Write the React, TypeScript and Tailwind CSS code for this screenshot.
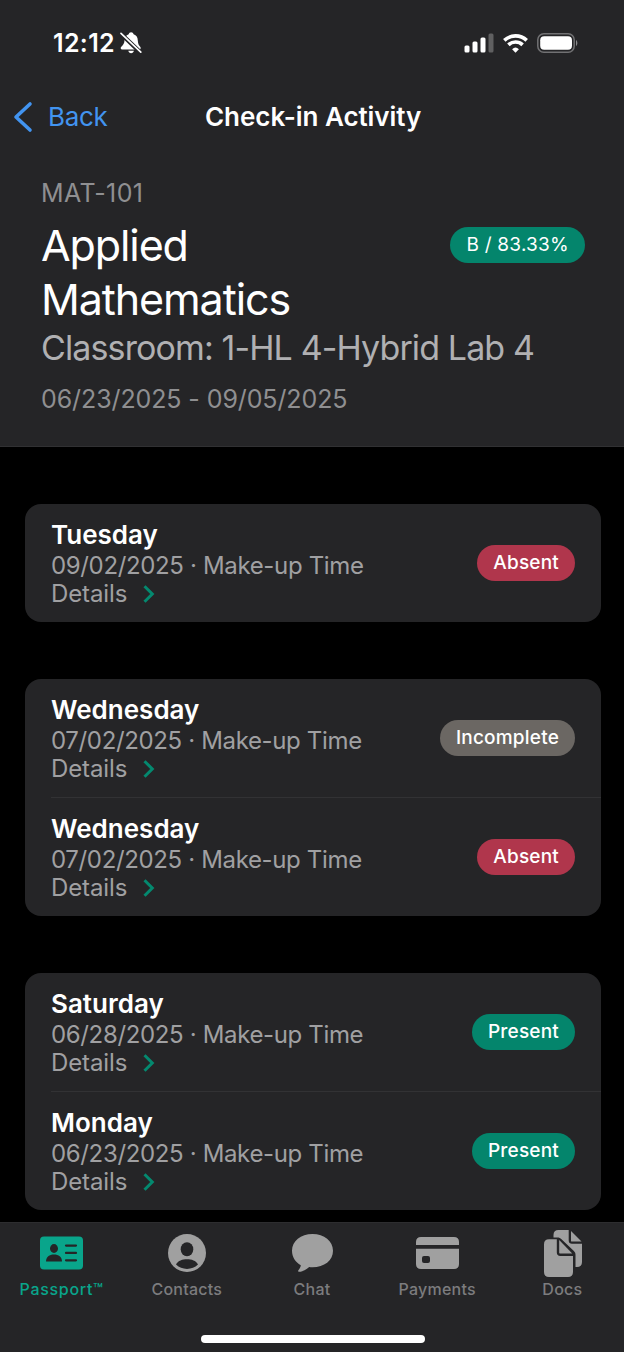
type Status = "Absent" | "Incomplete" | "Present";
type Entry = { day: string; date: string; status: Status };

const groups: Entry[][] = [
  [{ day: "Tuesday", date: "09/02/2025", status: "Absent" }],
  [
    { day: "Wednesday", date: "07/02/2025", status: "Incomplete" },
    { day: "Wednesday", date: "07/02/2025", status: "Absent" },
  ],
  [
    { day: "Saturday", date: "06/28/2025", status: "Present" },
    { day: "Monday", date: "06/23/2025", status: "Present" },
  ],
];

const statusColor: Record<Status, string> = {
  Absent: "bg-[#b0364c]",
  Incomplete: "bg-[#6b6763]",
  Present: "bg-[#04856c]",
};

function StatusBar() {
  return (
    <div className="flex h-[86px] items-center pl-[53px] pr-[45px] text-white">
      <span className="text-[25px] font-semibold leading-none tracking-[0.35px]">12:12</span>
      <svg className="ml-[5px]" width="22" height="22" viewBox="0 0 22 22" fill="currentColor">
        <path d="M8.3 18.8h5.6c-.3 1.600-1.400 2.400-2.800 2.400s-2.500-.8-2.800-2.400Z" />
        <path d="M11.1.3c1.300 0 2.200.8 2.500 1.900 2.900 1 4.100 3.200 4.200 6.200.2 3.600 1 4.900 2.600 6.600.5.600.3 2.500-.8 2.500H2.200c-1.600 0-1.900-1.600-1.100-2.500 2.200-2.400 3.200-3.400 3.400-6.600.1-3 1.400-5.200 4.200-6.200C9 1.100 9.800.3 11.100.3Z" />
        <path d="M0 .8 21 21" stroke="#252527" strokeWidth="4.200" />
        <path d="m1 1.300 19.800 18.800" stroke="currentColor" strokeWidth="1.700" strokeLinecap="round" />
      </svg>
      <div className="ml-auto flex items-center gap-[9px]">
        <svg width="30" height="20" viewBox="0 0 30 20" fill="currentColor">
          <rect x="0.500" y="12.500" width="5" height="7" rx="1.500" />
          <rect x="8.500" y="8.500" width="5" height="11" rx="1.500" />
          <rect x="16.500" y="4.500" width="5" height="15" rx="1.500" />
          <rect x="24.500" y="0.500" width="5" height="19" rx="1.500" opacity="0.270" />
        </svg>
        <svg width="25" height="19" viewBox="0 0 25 19" fill="none" stroke="currentColor" strokeWidth="3.600">
          <path d="M1.300 6.400a16.200 16.200 0 0 1 22.400 0" />
          <path d="M5.400 10.900a10.300 10.300 0 0 1 14.200 0" />
          <path d="m12.500 18.700-3.400-3.500a5 5 0 0 1 6.800 0Z" fill="currentColor" stroke="none" />
        </svg>
        <svg width="42" height="20" viewBox="0 0 42 20">
          <rect x="0.800" y="0.800" width="36.400" height="18.400" rx="6" fill="none" stroke="#717173" strokeWidth="1.500" />
          <rect x="3.200" y="3.300" width="31.800" height="13.500" rx="4" fill="#fff" />
          <path d="M39 7c1.800.7 1.800 5.300 0 6Z" fill="#8a8a8c" />
        </svg>
      </div>
    </div>
  );
}

function Header() {
  return (
    <header className="h-[447px] shrink-0 border-b border-[#313133] bg-[#252527]">
      <StatusBar />
      <div className="grid h-[62px] grid-cols-[205px_1fr_205px] items-center">
        <a className="flex items-center pl-[13px] text-[#4294f0]">
          <svg width="20" height="32" viewBox="0 0 20 32" fill="none" stroke="currentColor" strokeWidth="3.600" strokeLinecap="round" strokeLinejoin="round">
            <path d="M17 3 3 16l14 13" />
          </svg>
          <span className="ml-[15px] text-[26px] leading-none tracking-[-0.3px]">Back</span>
        </a>
        <h1 className="whitespace-nowrap text-center text-[26px] font-semibold leading-none tracking-[-0.05px] text-white">
          Check-in Activity
        </h1>
      </div>
      <div className="px-[41px] pt-[30px]">
        <p className="text-[25px] leading-[30px] tracking-[0.4px] text-[#8f8f91]">MAT-101</p>
        <div className="mt-[10px] flex items-start justify-between">
          <h2 className="w-[300px] text-[43px] leading-[54px] tracking-[-1.1px] text-white">Applied Mathematics</h2>
          <span className="-mr-[2px] mt-[9px] flex h-9 items-center rounded-full bg-[#04856c] px-4 pt-px text-[19px] tracking-[0.25px] text-white">
            B / 83.33%
          </span>
        </div>
        <p className="whitespace-nowrap pt-px text-[34px] leading-[42px] tracking-[-0.88px] text-[#b0b0b2]">
          Classroom: 1-HL 4-Hybrid Lab 4
        </p>
        <p className="mt-[15px] text-[25px] leading-[30px] tracking-[-0.1px] text-[#8f8f91]">06/23/2025 - 09/05/2025</p>
      </div>
    </header>
  );
}

function ActivityRow({ entry }: { entry: Entry }) {
  return (
    <div className="flex h-[118px] items-center justify-between px-[26px]">
      <div className="pt-[2px]">
        <p className="text-[26px] font-semibold leading-[30px] text-white">{entry.day}</p>
        <p className="mt-px text-[24px] leading-[29px] tracking-[-0.35px] text-[#a0a0a2]">{entry.date} · Make-up Time</p>
        <p className="flex items-center text-[24px] leading-[28px] tracking-[-0.1px] text-[#a0a0a2]">
          Details
          <svg className="ml-4" width="12" height="18" viewBox="0 0 12 18" fill="none" stroke="#04896f" strokeWidth="3">
            <path d="m1.500 1.200 7.800 7.800-7.800 7.800" />
          </svg>
        </p>
      </div>
      <span
        className={`flex h-9 items-center rounded-full px-4 pt-px text-[19px] font-medium tracking-[0.2px] text-white ${statusColor[entry.status]}`}
      >
        {entry.status}
      </span>
    </div>
  );
}

const tabs = [
  {
    label: "Passport™",
    icon: (
      <svg width="43" height="34" viewBox="0 0 43 34">
        <rect y="0.500" width="43" height="33" rx="4" fill="currentColor" />
        <g fill="#252527">
          <ellipse cx="14" cy="12.500" rx="4" ry="4.400" />
          <path d="M6 25.500c0-4.600 3.400-7 8-7s8 2.400 8 7Z" />
        </g>
        <path d="M26 9.600h10M26 16.900h10M26 24.300h10" stroke="#252527" strokeWidth="2.200" strokeLinecap="round" />
      </svg>
    ),
  },
  {
    label: "Contacts",
    icon: (
      <svg width="38" height="38" viewBox="0 0 38 38">
        <circle cx="19" cy="19" r="19" fill="currentColor" />
        <ellipse cx="19" cy="15.300" rx="6.300" ry="7" fill="#252527" />
        <path d="M8 30.500c2-4 6.500-5.300 11-5.300s9 1.300 11 5.300a16 16 0 0 1-22 0Z" fill="#252527" />
      </svg>
    ),
  },
  {
    label: "Chat",
    icon: (
      <svg className="ml-px" width="41" height="38" viewBox="0 0 42 38" preserveAspectRatio="none" fill="currentColor">
        <path d="M21 0c12 0 21 7 21 16.800s-9 16.500-21 16.500c-1.200 0-2.300 0-3.400-.2-2.800 2.300-6.500 4.600-10.200 4.700-1.300 0-1.500-1-.7-1.900 1.200-1.400 2-2.700 2.300-4.700C3.500 28.200 0 23 0 16.800 0 7 9 0 21 0Z" />
      </svg>
    ),
  },
  {
    label: "Payments",
    icon: (
      <svg width="43" height="32" viewBox="0 0 43 32">
        <path d="M0 8V5c0-3.200 1.800-5 5-5h33c3.200 0 5 1.800 5 5v3Z" fill="currentColor" />
        <path d="M0 11.700h43V27c0 3.200-1.800 5-5 5H5c-3.200 0-5-1.800-5-5Z" fill="currentColor" />
        <rect x="6" y="19" width="8" height="7" rx="2" fill="#252527" />
      </svg>
    ),
  },
  {
    label: "Docs",
    icon: (
      <svg className="ml-px" width="38" height="47" viewBox="0 0 38 47" fill="currentColor">
        <path d="M9.500 7.500V5c0-3.200 1.800-5 5-5h10.200v10.500c0 2.200 1.300 3.300 3.300 3.300h10V32c0 3.200-1.800 5-5 5h-1.500V25c0-1.700-.4-2.800-1.600-4L17.500 9.300c-1.200-1.200-2.300-1.800-4-1.800Z" />
        <path d="M27 1v9.700c0 .6.300.9.900.9h9.600Z" />
        <path d="M5 9.300h7.800v13.200c0 2.200 1.300 3.400 3.400 3.400H29V42c0 3.200-1.800 5-5 5H5c-3.200 0-5-1.800-5-5V14.300c0-3.200 1.800-5 5-5Z" />
        <path d="M15.200 10v12.500c0 .7.300 1 1 1h12Z" />
      </svg>
    ),
  },
];

function TabBar() {
  return (
    <nav className="flex h-[130px] shrink-0 flex-col items-center border-t border-[#2d2d2f] bg-[#252527]">
      <div className="-mx-px grid w-[626px] grid-cols-5">
        {tabs.map((tab, i) => (
          <div key={tab.label} className={`flex flex-col items-center ${i === 0 ? "text-[#09a58b]" : "text-[#a0a0a0]"}`}>
            <div className="mt-[5px] flex h-[50px] items-center">{tab.icon}</div>
            <span
              className={`mt-px text-[16px] font-medium leading-5 ${i === 0 ? "tracking-[0.7px]" : "tracking-[0.25px] text-[#7c7c7e]"}`}
            >
              {tab.label}
            </span>
          </div>
        ))}
      </div>
      <div className="mb-[9px] ml-[2px] mt-auto h-2 w-56 rounded-full bg-white" />
    </nav>
  );
}

export default function App() {
  return (
    <div className="flex h-[1352px] w-[624px] flex-col overflow-hidden bg-black font-['Inter',sans-serif]">
      <Header />
      <main className="flex flex-1 flex-col gap-[57px] overflow-hidden pl-[25px] pr-[23px] pt-[57px]">
        {groups.map((group, g) => (
          <section key={g} className="shrink-0 rounded-2xl bg-[#252527]">
            {group.map((entry, i) => (
              <div key={i}>
                {i > 0 && <div className="ml-[26px] h-px bg-[#323234]" />}
                <ActivityRow entry={entry} />
              </div>
            ))}
          </section>
        ))}
      </main>
      <TabBar />
    </div>
  );
}
